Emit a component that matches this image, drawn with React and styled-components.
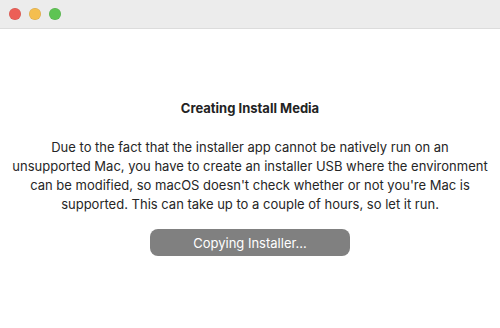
import React from "react";
import styled, { createGlobalStyle } from "styled-components";

const GlobalStyle = createGlobalStyle`
  html, body {
    margin: 0;
    padding: 0;
    background: #ffffff;
  }
  body {
    font-family: Inter, "Liberation Sans", Arial, sans-serif;
    -webkit-font-smoothing: antialiased;
  }
`;

const Window = styled.div`
  width: 500px;
  height: 328px;
  display: flex;
  flex-direction: column;
  background: #ffffff;
  overflow: hidden;
`;

const TitleBar = styled.div`
  height: 28px;
  flex-shrink: 0;
  display: flex;
  align-items: center;
  gap: 8px;
  padding-left: 9px;
  background: #ececec;
  border-bottom: 1px solid #dcdcdc;
`;

const Light = styled.span`
  width: 12px;
  height: 12px;
  border-radius: 50%;
  background: ${(p) => p.color};
  box-shadow: inset 0 0 0 0.5px rgba(0, 0, 0, 0.12);
`;

const Content = styled.div`
  flex: 1;
  display: flex;
  flex-direction: column;
  align-items: center;
  padding-top: 71px;
`;

const Title = styled.h1`
  margin: 0;
  font-size: 13px;
  line-height: 16px;
  font-weight: 700;
  color: #232323;
`;

const Body = styled.p`
  margin: 22px 0 0 0;
  font-size: 13px;
  line-height: 19px;
  color: #262626;
  text-align: center;
`;

const ProgressButton = styled.div`
  margin-top: 15px;
  width: 200px;
  height: 27px;
  border-radius: 8px;
  background: #808080;
  color: #ffffff;
  font-size: 13px;
  display: flex;
  align-items: center;
  justify-content: center;
`;

export default function App() {
  return (
    <>
      <GlobalStyle />
      <Window>
        <TitleBar>
          <Light color="#ec5f57" />
          <Light color="#f4be4f" />
          <Light color="#5ec453" />
        </TitleBar>
        <Content>
          <Title>Creating Install Media</Title>
          <Body>
            Due to the fact that the installer app cannot be natively run on an
            <br />
            unsupported Mac, you have to create an installer USB where the environment
            <br />
            can be modified, so macOS doesn't check whether or not you're Mac is
            <br />
            supported. This can take up to a couple of hours, so let it run.
          </Body>
          <ProgressButton>Copying Installer...</ProgressButton>
        </Content>
      </Window>
    </>
  );
}
